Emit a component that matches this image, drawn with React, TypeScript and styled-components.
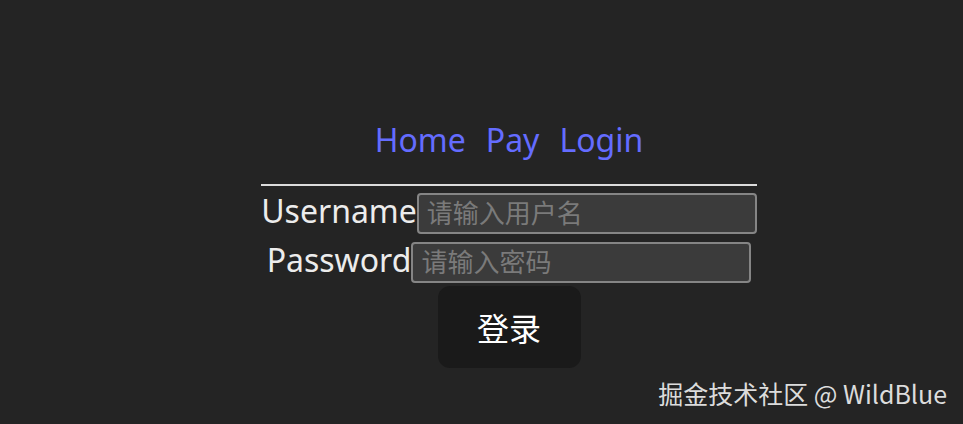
import React from "react";
import styled, { createGlobalStyle } from "styled-components";

const Global = createGlobalStyle`
  html, body { margin: 0; padding: 0; }
  body {
    background: #242424;
    color: rgba(255, 255, 255, 0.87);
    font-family: "Noto Sans", "Noto Sans CJK SC", sans-serif;
    width: 963px;
    height: 424px;
    overflow: hidden;
  }
`;

const Page = styled.div`
  position: relative;
  width: 963px;
  height: 424px;
  display: flex;
  flex-direction: column;
  align-items: center;
  padding-top: 118px;
  padding-left: 55px;
  box-sizing: border-box;
`;

const Nav = styled.nav`
  display: flex;
  gap: 20px;
  height: 44px;
  align-items: center;
  margin-bottom: 22px;
`;

const NavLink = styled.a`
  color: #646cff;
  font-size: 32px;
  text-decoration: none;
  line-height: 44px;
`;

const Form = styled.form`
  width: 496px;
  border-top: 2px solid #dcdcdc;
  display: flex;
  flex-direction: column;
  align-items: center;
  padding-top: 7px;
  gap: 8px;
`;

const Row = styled.div`
  display: flex;
  align-items: flex-start;
  justify-content: center;
`;

const Label = styled.label`
  font-size: 32px;
  color: #ececec;
  line-height: 35px;
`;

const Input = styled.input`
  width: 340px;
  height: 41px;
  box-sizing: border-box;
  background: #3b3b3b;
  border: 2px solid #858585;
  border-radius: 4px;
  font-family: "Noto Sans CJK SC", sans-serif;
  font-size: 26px;
  color: #ddd;
  padding: 0 8px 5px;
  outline: none;
  &::placeholder { color: #7a7a7a; }
`;

const Button = styled.button`
  margin-top: -5px;
  width: 143px;
  height: 82px;
  border-radius: 12px;
  border: none;
  background: #1a1a1a;
  color: #fff;
  font-family: "Noto Sans CJK SC", sans-serif;
  font-size: 32px;
  padding-bottom: 2px;
`;

const Watermark = styled.div`
  position: absolute;
  right: 16px;
  bottom: 13px;
  font-family: "Noto Sans CJK SC", sans-serif;
  font-size: 25px;
  color: #dcdcdc;
`;

export default function App() {
  return (
    <>
      <Global />
      <Page>
        <Nav>
          <NavLink href="#">Home</NavLink>
          <NavLink href="#">Pay</NavLink>
          <NavLink href="#">Login</NavLink>
        </Nav>
        <Form onSubmit={(e) => e.preventDefault()}>
          <Row>
            <Label>Username</Label>
            <Input placeholder="请输入用户名" />
          </Row>
          <Row>
            <Label>Password</Label>
            <Input type="password" placeholder="请输入密码" />
          </Row>
          <Button type="submit">登录</Button>
        </Form>
        <Watermark>掘金技术社区 @ WildBlue</Watermark>
      </Page>
    </>
  );
}
